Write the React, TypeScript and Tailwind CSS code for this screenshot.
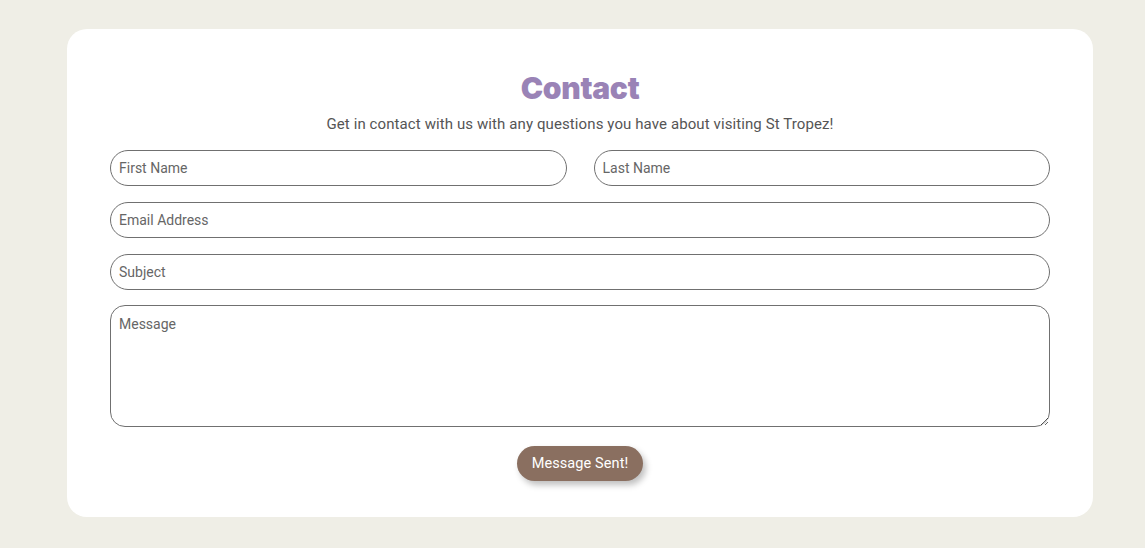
import React from "react";

export default function App() {
  const inputCls =
    "h-[36px] w-full rounded-full border border-[#707070] bg-white px-[8px] text-[14px] text-[#555] placeholder:text-[#666] outline-none";
  return (
    <div className="min-h-[548px] w-full bg-[#efeee6] pt-[29px] pb-[31px]" style={{ fontFamily: "Roboto, 'Liberation Sans', sans-serif" }}>
      <div className="ml-[67px] flex h-[488px] w-[1026px] flex-col items-center rounded-[20px] bg-white px-[43px] pt-[41px]">
        <h1 className="text-[30px] font-black leading-[36px] tracking-[-0.3px] text-[#9a83b6]" style={{ fontFamily: "Inter, 'Noto Sans', sans-serif" }}>
          Contact
        </h1>
        <p className="mt-[8px] text-[15px] leading-[20px] tracking-[0.1px] text-[#555]">
          Get in contact with us with any questions you have about visiting St Tropez!
        </p>
        <form className="mt-[16px] flex w-full flex-col" onSubmit={(e) => e.preventDefault()}>
          <div className="flex gap-[27px]">
            <input className={inputCls} placeholder="First Name" />
            <input className={inputCls} placeholder="Last Name" />
          </div>
          <input className={inputCls + " mt-[16px]"} placeholder="Email Address" />
          <input className={inputCls + " mt-[16px]"} placeholder="Subject" />
          <textarea
            className="mt-[15px] h-[122px] w-full rounded-[15px] border border-[#707070] bg-white px-[8px] py-[9px] text-[14px] leading-[18px] text-[#555] placeholder:text-[#666] outline-none"
            placeholder="Message"
          />
          <div className="mt-[19px] flex justify-center">
            <button className="h-[35px] w-[126px] rounded-full bg-[#8a6f60] text-[14.5px] font-normal tracking-[0.1px] text-white shadow-[3px_4px_6px_rgba(0,0,0,0.25)]">
              Message Sent!
            </button>
          </div>
        </form>
      </div>
    </div>
  );
}
